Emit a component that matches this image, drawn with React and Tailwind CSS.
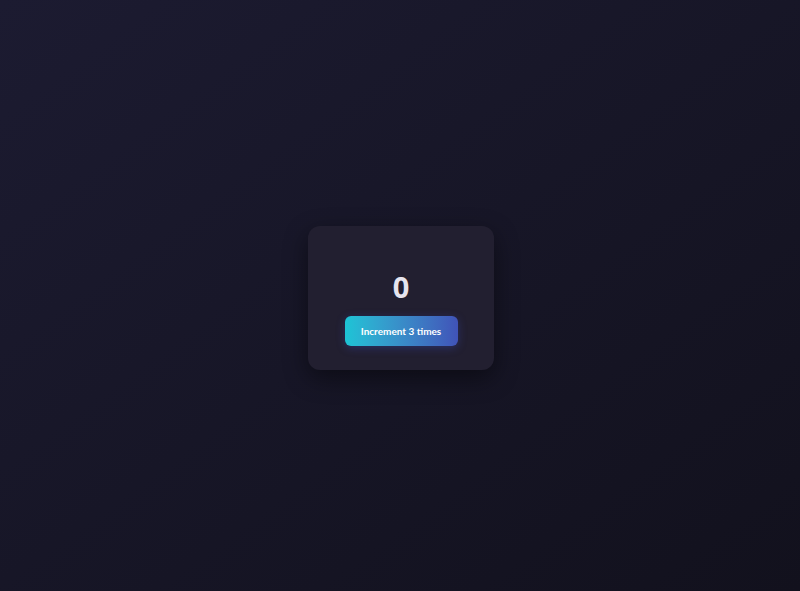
import React, { useState } from 'react';

const App = () => {
  const [count, setCount] = useState(0);

  const handleClick = () => {
    setCount(c => c + 1);
    setCount(c => c + 1);
    setCount(c => c + 1);
  };

  return (
    <div
      className="w-full h-[591px] flex items-center justify-center bg-gradient-to-br from-[#1c1b31] to-[#12111d]"
      style={{ fontFamily: 'Lato, "Noto Sans", sans-serif' }}
    >
      <div className="w-[186px] h-[144px] mt-[5px] ml-[2px] rounded-xl bg-[#221f30] shadow-[0_8px_24px_rgba(0,0,0,0.45)] flex flex-col items-center pt-[43px]">
        <div
          className="text-[29px] leading-[36px] font-bold text-[#e6e4ee]"
          style={{ fontFamily: '"Open Sans", sans-serif' }}
        >
          {count}
        </div>
        <button
          onClick={handleClick}
          className="mt-[11px] w-[113px] h-[30px] rounded-md bg-gradient-to-r from-[#1cc4d6] to-[#4053b8] text-white text-[10px] font-bold shadow-[0_2px_8px_rgba(60,80,200,0.35)]"
        >
          Increment 3 times
        </button>
      </div>
    </div>
  );
};

export default App;
